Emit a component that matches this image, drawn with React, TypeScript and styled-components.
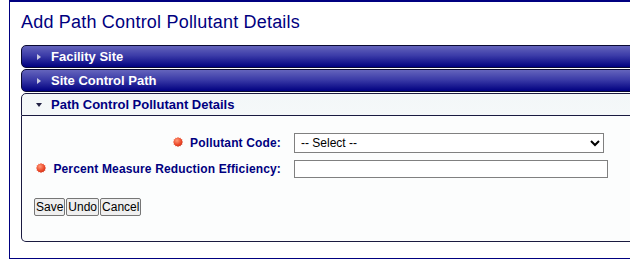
import React, { useState } from "react";
import styled, { createGlobalStyle } from "styled-components";

const GlobalStyle = createGlobalStyle`
  html, body {
    margin: 0;
    padding: 0;
    background: #ffffff;
    font-family: "Liberation Sans", Arial, sans-serif;
    overflow: hidden;
  }
`;

// Little red "required" badge drawn as a burst
const RequiredMark = () => {
  const points: string[] = [];
  for (let i = 0; i < 24; i++) {
    const r = i % 2 === 0 ? 5 : 4.2;
    const a = (Math.PI * 2 * i) / 24;
    points.push(`${(5 + r * Math.cos(a)).toFixed(2)},${(5 + r * Math.sin(a)).toFixed(2)}`);
  }
  return (
    <StarSvg width="10" height="10" viewBox="0 0 10 10">
      <defs>
        <radialGradient id="req" cx="40%" cy="35%" r="70%">
          <stop offset="0%" stopColor="#ff9a7a" />
          <stop offset="60%" stopColor="#ec4a2a" />
          <stop offset="100%" stopColor="#c8301a" />
        </radialGradient>
      </defs>
      <polygon points={points.join(" ")} fill="url(#req)" />
    </StarSvg>
  );
};

const Triangle = ({ open }: { open: boolean }) =>
  open ? (
    <svg width="8" height="8" viewBox="0 0 8 8">
      <polygon points="1,2 7,2 4,6" fill="#222244" />
    </svg>
  ) : (
    <svg width="8" height="8" viewBox="0 0 8 8">
      <polygon points="2,1 6,4 2,7" fill="#c8c8e0" />
    </svg>
  );

const sections = ["Facility Site", "Site Control Path", "Path Control Pollutant Details"];

const App = () => {
  const [active, setActive] = useState<number>(2);

  return (
    <>
      <GlobalStyle />
      <Page>
        <Frame>
          <Title>Add Path Control Pollutant Details</Title>
          <Accordion>
            {sections.map((name, i) => (
              <React.Fragment key={name}>
                <Header $open={active === i} onClick={() => setActive(i)}>
                  <IconSlot>
                    <Triangle open={active === i} />
                  </IconSlot>
                  {name}
                </Header>
                {active === i && i === 2 && (
                  <Panel>
                    <FormGrid>
                      <Label>
                        <RequiredMark />
                        Pollutant Code:
                      </Label>
                      <Field>
                        <Select defaultValue="">
                          <option value="">-- Select --</option>
                        </Select>
                      </Field>
                      <Label>
                        <RequiredMark />
                        Percent Measure Reduction Efficiency:
                      </Label>
                      <Field>
                        <TextInput type="text" />
                      </Field>
                    </FormGrid>
                    <ButtonRow>
                      <Button>Save</Button>
                      <Button>Undo</Button>
                      <Button>Cancel</Button>
                    </ButtonRow>
                  </Panel>
                )}
              </React.Fragment>
            ))}
          </Accordion>
        </Frame>
      </Page>
    </>
  );
};

export default App;

const Page = styled.div`
  padding-left: 9px;
  width: 621px;
  overflow: hidden;
`;

const Frame = styled.div`
  width: 700px;
  border: 1px solid #000080;
  border-top-width: 2px;
  border-right: none;
  padding: 8px 0 16px 11px;
`;

const Title = styled.h1`
  margin: 0;
  font-size: 18px;
  font-weight: normal;
  letter-spacing: 0.2px;
  color: #000080;
  line-height: 22px;
  padding-top: 1px;
`;

const Accordion = styled.div`
  margin-top: 12px;
  display: flex;
  flex-direction: column;
  gap: 1px;
`;

const Header = styled.div<{ $open: boolean }>`
  display: flex;
  align-items: center;
  height: 21px;
  font-size: 13px;
  font-weight: bold;
  cursor: pointer;
  border: 1px solid ${(p) => (p.$open ? "#1a1a40" : "#0a0a33")};
  border-radius: ${(p) => (p.$open ? "5px 5px 0 0" : "5px")};
  color: ${(p) => (p.$open ? "#000080" : "#ffffff")};
  background: ${(p) =>
    p.$open
      ? "linear-gradient(#f3f7f8, #f5f8f9)"
      : "linear-gradient(#6464bc 0%, #3c3ca8 45%, #000080 100%)"};
`;

const IconSlot = styled.span`
  display: inline-flex;
  width: 8px;
  margin-left: 13px;
  margin-right: 8px;
`;

const Panel = styled.div`
  border: 1px solid #1a1a40;
  border-top: none;
  border-radius: 0 0 5px 5px;
  background: #fcfdfd;
  padding: 17px 12px 25px 12px;
  margin-top: -1px;
  height: 83px;
`;

const FormGrid = styled.div`
  display: grid;
  grid-template-columns: 247px auto;
  column-gap: 13px;
  row-gap: 7px;
  align-items: center;
  width: 586px;
`;

const Label = styled.label`
  display: flex;
  align-items: center;
  justify-content: flex-end;
  gap: 7px;
  font-size: 12px;
  font-weight: bold;
  letter-spacing: 0.15px;
  color: #000080;
  white-space: nowrap;
`;

const StarSvg = styled.svg`
  flex-shrink: 0;
  margin-top: -2px;
`;

const Field = styled.div`
  display: flex;
`;

const Select = styled.select`
  width: 310px;
  height: 20px;
  font-family: "Liberation Sans", Arial, sans-serif;
  font-size: 12px;
  color: #000000;
  border: 1px solid #808080;
  border-radius: 0;
  background: #ffffff;
  padding: 0 0 0 2px;
`;

const TextInput = styled.input`
  width: 308px;
  height: 14px;
  font-family: "Liberation Sans", Arial, sans-serif;
  font-size: 12px;
  border: 1px solid #808080;
  border-radius: 0;
  padding: 1px 2px;
  background: #ffffff;
`;

const ButtonRow = styled.div`
  display: flex;
  gap: 1px;
  margin-top: 20px;
`;

const Button = styled.button`
  font-family: "Liberation Sans", Arial, sans-serif;
  font-size: 12px;
  color: #000000;
  background: #efefef;
  border: 1px solid #767676;
  border-radius: 2px;
  padding: 1px 1px;
  height: 18px;
  line-height: 14px;
`;
